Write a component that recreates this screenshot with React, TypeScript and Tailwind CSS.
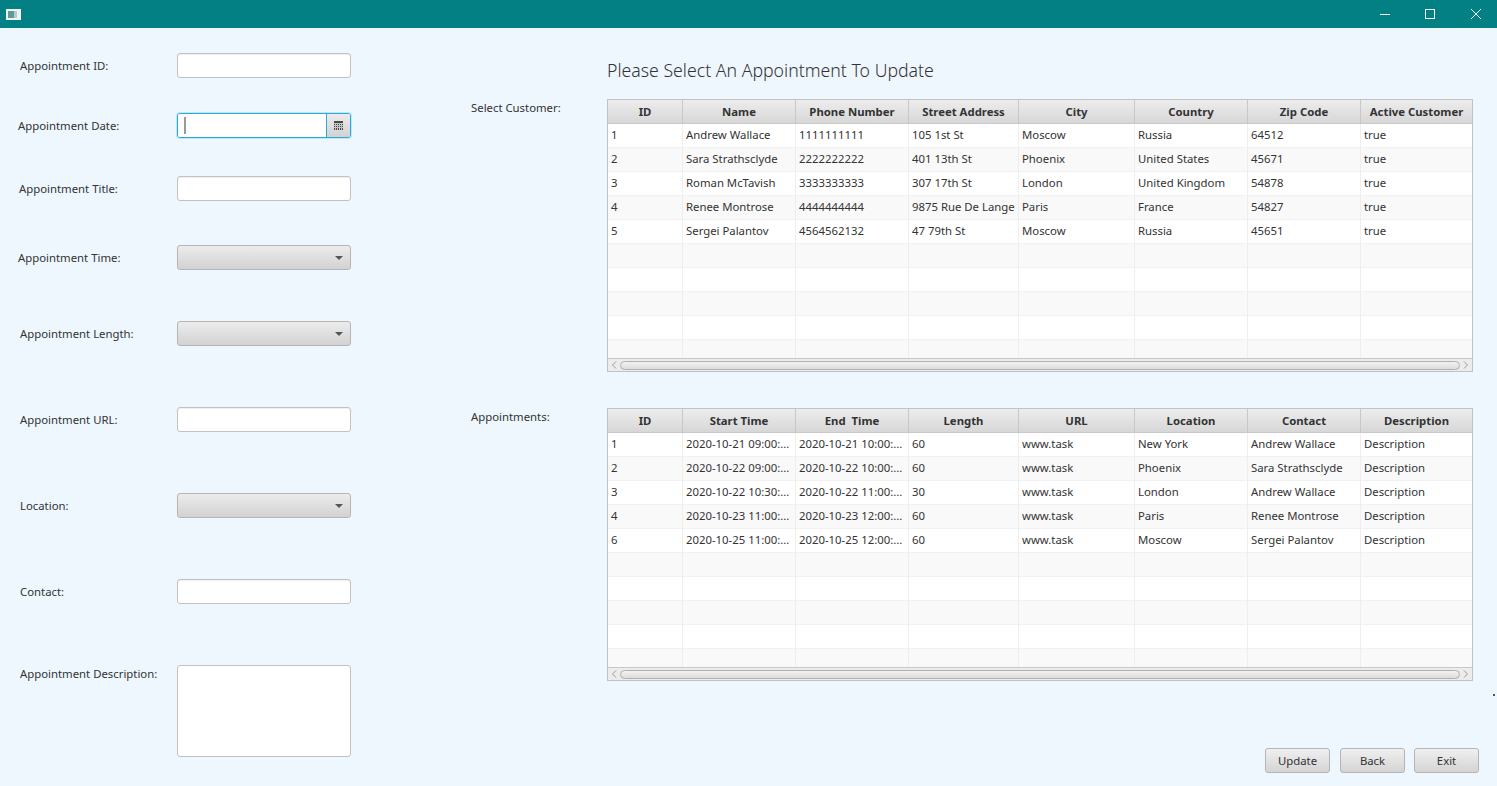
import React from "react"

const customerCols = [
  { title: "ID", w: 75 },
  { title: "Name", w: 113 },
  { title: "Phone Number", w: 113 },
  { title: "Street Address", w: 110 },
  { title: "City", w: 116 },
  { title: "Country", w: 113 },
  { title: "Zip Code", w: 113 },
  { title: "Active Customer", w: 111 },
]

const customerRows = [
  ["1", "Andrew Wallace", "1111111111", "105 1st St", "Moscow", "Russia", "64512", "true"],
  ["2", "Sara Strathsclyde", "2222222222", "401 13th St", "Phoenix", "United States", "45671", "true"],
  ["3", "Roman McTavish", "3333333333", "307 17th St", "London", "United Kingdom", "54878", "true"],
  ["4", "Renee Montrose", "4444444444", "9875 Rue De Lange", "Paris", "France", "54827", "true"],
  ["5", "Sergei Palantov", "4564562132", "47 79th St", "Moscow", "Russia", "45651", "true"],
]

const appointmentCols = [
  { title: "ID", w: 75 },
  { title: "Start Time", w: 113 },
  { title: "End  Time", w: 113 },
  { title: "Length", w: 110 },
  { title: "URL", w: 116 },
  { title: "Location", w: 113 },
  { title: "Contact", w: 113 },
  { title: "Description", w: 111 },
]

const appointmentRows = [
  ["1", "2020-10-21 09:00:...", "2020-10-21 10:00:...", "60", "www.task", "New York", "Andrew Wallace", "Description"],
  ["2", "2020-10-22 09:00:...", "2020-10-22 10:00:...", "60", "www.task", "Phoenix", "Sara Strathsclyde", "Description"],
  ["3", "2020-10-22 10:30:...", "2020-10-22 11:00:...", "30", "www.task", "London", "Andrew Wallace", "Description"],
  ["4", "2020-10-23 11:00:...", "2020-10-23 12:00:...", "60", "www.task", "Paris", "Renee Montrose", "Description"],
  ["6", "2020-10-25 11:00:...", "2020-10-25 12:00:...", "60", "www.task", "Moscow", "Sergei Palantov", "Description"],
]

const TextBox = () => (
  <div className="w-[174px] h-[25px] bg-white rounded-[3px] border border-[#c2c2c2] shadow-[inset_0_1px_1px_#eeeeee]" />
)

const Combo = () => (
  <div className="w-[174px] h-[25px] rounded-[3px] border border-[#b5b5b5] bg-gradient-to-b from-[#ececec] to-[#d2d2d2] flex items-center justify-end pr-[7px]">
    <svg width="8" height="4" viewBox="0 0 8 4"><path d="M0 0h8L4 4z" fill="#555555" /></svg>
  </div>
)

const DatePick = () => (
  <div className="w-[174px] h-[25px] rounded-[3px] border border-[#29a9dc] shadow-[0_0_0_1px_#bfe6f6] flex overflow-hidden">
    <div className="flex-1 bg-white flex items-center pl-[6px]">
      <div className="w-[2px] h-[17px] bg-[#999999]" />
    </div>
    <div className="w-[24px] border-l border-[#29a9dc] bg-gradient-to-b from-[#ececec] to-[#d2d2d2] flex items-center justify-center">
      <svg width="9" height="9" viewBox="0 0 9 9" shapeRendering="crispEdges">
        <rect width="9" height="9" fill="#4a4a4a" />
        <path d="M0 2.5h9M0 4.5h9M0 6.5h9M1.5 2v7M3.5 2v7M5.5 2v7M7.5 2v7" stroke="#c4c4c4" strokeWidth="1" />
      </svg>
    </div>
  </div>
)

const FormRow = ({ label, className, labelClass, children }: { label: string; className: string; labelClass: string; children: React.ReactNode }) => (
  <div className={`flex items-center h-[25px] ${className}`}>
    <span className={labelClass}>{label}</span>
    {children}
  </div>
)

const ScrollBar = () => (
  <div className="h-[13px] bg-[#ececec] border-t border-[#c8c8c8] flex items-center px-[3px] gap-[3px]">
    <svg width="6" height="8" viewBox="0 0 6 8" className="shrink-0"><path d="M5 0.5L1.5 4L5 7.5" fill="none" stroke="#9a9a9a" /></svg>
    <div className="flex-1 h-[9px] rounded-[5px] border border-[#b0b0b0] bg-gradient-to-b from-[#f2f2f2] to-[#dcdcdc]" />
    <svg width="6" height="8" viewBox="0 0 6 8" className="shrink-0"><path d="M1 0.5L4.5 4L1 7.5" fill="none" stroke="#9a9a9a" /></svg>
  </div>
)

const DataTable = ({ cols, rows }: { cols: { title: string; w: number }[]; rows: string[][] }) => {
  const blanks = Array.from({ length: 5 }, () => cols.map(() => ""))
  const allRows = [...rows, ...blanks]
  return (
    <div className="w-[866px] h-[273px] border border-[#c2c2c2] bg-white flex flex-col">
      <div className="h-[259px] overflow-hidden">
        <table className="table-fixed w-[864px] border-separate border-spacing-0">
          <colgroup>
            {cols.map((col, i) => <col key={i} style={{ width: col.w }} />)}
          </colgroup>
          <thead>
            <tr className="h-[24px] bg-gradient-to-b from-[#ededed] to-[#d6d6d6]">
              {cols.map((col, i) => (
                <th key={i} className="p-0 text-center font-bold text-[11.35px] text-[#333333] whitespace-pre border-r border-b border-[#c8c8c8] last:border-r-0">{col.title}</th>
              ))}
            </tr>
          </thead>
          <tbody>
            {allRows.map((row, r) => (
              <tr key={r} className={`h-[24px] ${r % 2 === 0 ? "bg-white" : "bg-[#f9f9f9]"}`}>
                {row.map((cell, c) => (
                  <td key={c} className="p-0 pl-[3px] pb-[2px] text-[11.35px] text-[#333333] whitespace-nowrap overflow-hidden border-r border-b border-r-[#eeeeee] border-b-[#f1f1f1] last:border-r-0">{cell}</td>
                ))}
              </tr>
            ))}
          </tbody>
        </table>
      </div>
      <ScrollBar />
    </div>
  )
}

const ActionButton = ({ title, className = "" }: { title: string; className?: string }) => (
  <button className={`w-[65px] h-[25px] rounded-[3px] border border-[#b5b5b5] bg-gradient-to-b from-[#f0f0f0] to-[#d4d4d4] text-[11.35px] text-[#333333] ${className}`}>{title}</button>
)

const App = () => {
  return (
    <div className="relative w-[1497px] h-[786px] overflow-hidden bg-[#eef7fe] text-[#333333] text-[11.35px] font-['Noto_Sans',sans-serif]">
      <header className="h-[28px] bg-[#038084] flex items-center">
        <svg width="15" height="11" viewBox="0 0 15 11" className="ml-[6px]">
          <rect width="15" height="11" fill="#eef3f3" />
          <rect x="2" y="2" width="6" height="7" fill="#5f9a98" />
          <rect x="8" y="2" width="3" height="7" fill="#b9cccc" />
        </svg>
        <div className="ml-auto flex items-center">
          <svg width="10" height="10" viewBox="0 0 10 10" className="mr-[35px]"><path d="M0 5.5h10" stroke="#ffffff" /></svg>
          <svg width="10" height="10" viewBox="0 0 10 10" className="mr-[36px]"><rect x="0.5" y="0.5" width="9" height="9" fill="none" stroke="#ffffff" /></svg>
          <svg width="10" height="10" viewBox="0 0 10 10" className="mr-[16px]"><path d="M0 0l10 10M10 0L0 10" stroke="#ffffff" /></svg>
        </div>
      </header>

      <main className="flex h-[758px]">
        <section className="w-[471px] shrink-0 pt-[25px] flex flex-col">
          <FormRow label="Appointment ID:" className="" labelClass="ml-[20px] w-[157px]"><TextBox /></FormRow>
          <FormRow label="Appointment Date:" className="mt-[35px]" labelClass="ml-[18px] w-[159px]"><DatePick /></FormRow>
          <FormRow label="Appointment Title:" className="mt-[38px]" labelClass="ml-[19px] w-[158px]"><TextBox /></FormRow>
          <FormRow label="Appointment Time:" className="mt-[44px]" labelClass="ml-[18px] w-[159px]"><Combo /></FormRow>
          <FormRow label="Appointment Length:" className="mt-[51px]" labelClass="ml-[20px] w-[157px]"><Combo /></FormRow>
          <FormRow label="Appointment URL:" className="mt-[61px]" labelClass="ml-[20px] w-[157px]"><TextBox /></FormRow>
          <FormRow label="Location:" className="mt-[61px]" labelClass="ml-[20px] w-[157px]"><Combo /></FormRow>
          <FormRow label="Contact:" className="mt-[61px]" labelClass="ml-[20px] w-[157px]"><TextBox /></FormRow>
          <div className="flex items-start mt-[61px]">
            <span className="ml-[20px] w-[157px]">Appointment Description:</span>
            <div className="w-[174px] h-[92px] bg-white rounded-[3px] border border-[#c2c2c2]" />
          </div>
        </section>

        <section className="flex-1 flex flex-col">
          <h1 className="ml-[136px] mt-[29px] h-[26px] leading-[26px] text-[17.7px] font-light text-[#333333]">Please Select An Appointment To Update</h1>
          <div className="flex items-start mt-[16px]">
            <span className="w-[136px] leading-[18px]">Select Customer:</span>
            <DataTable cols={customerCols} rows={customerRows} />
          </div>
          <div className="flex items-start mt-[36px]">
            <span className="w-[136px] leading-[18px]">Appointments:</span>
            <DataTable cols={appointmentCols} rows={appointmentRows} />
          </div>
          <div className="flex justify-end gap-[9px] mt-[67px] pr-[18px]">
            <ActionButton title="Update" />
            <ActionButton title="Back" className="ml-[1px]" />
            <ActionButton title="Exit" />
          </div>
        </section>
      </main>

      <div className="absolute left-[1493px] top-[694px] w-[2px] h-[2px] bg-[#555555]" />
    </div>
  )
}

export default App
